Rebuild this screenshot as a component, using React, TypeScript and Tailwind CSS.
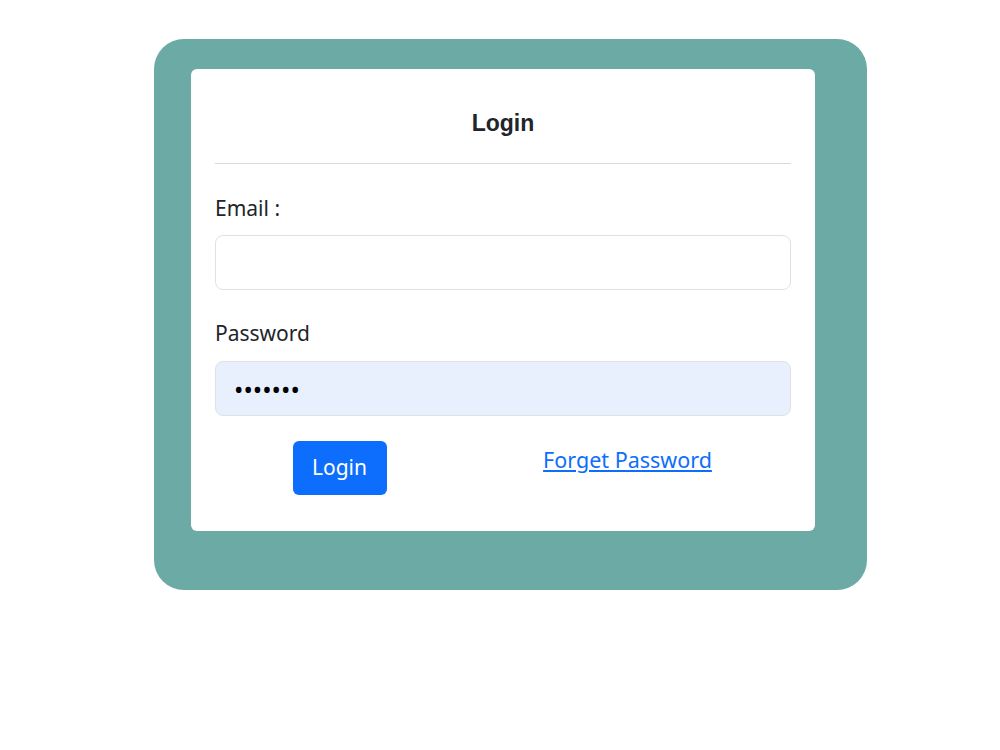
import React from "react";

export default function App() {
  return (
    <div className="min-h-[750px] w-[1000px] bg-white pt-[39px]" style={{ fontFamily: '"Noto Sans", sans-serif' }}>
      <div className="ml-[154px] w-[713px] rounded-[30px] bg-[#6caba5] pl-[37px] pr-[52px] pt-[30px] pb-[59px]">
        <div className="rounded-[6px] bg-white px-[24px] pt-[36px] pb-[36px]">
          <h1
            className="text-center text-[23px] font-bold leading-[36px] text-[#212529]"
            style={{ fontFamily: '"Liberation Sans", Arial, sans-serif' }}
          >
            Login
          </h1>
          <div className="mt-[22px] h-px bg-[#d9d9d9]" />
          <label className="mt-[29px] block text-[21px] leading-[30px] text-[#212529]">Email :</label>
          <input
            type="email"
            className="mt-[12px] block h-[55px] w-full rounded-[8px] border border-[#dee2e6] bg-white px-[20px] text-[21px] outline-none"
          />
          <label className="mt-[28px] block text-[21px] leading-[30px] text-[#212529]">Password</label>
          <input
            type="password"
            defaultValue="1234567"
            className="mt-[13px] block h-[55px] w-full rounded-[8px] border border-[#dee2e6] bg-[#e8f0fe] px-[18px] text-[25px] text-black outline-none"
          />
          <div className="mt-[25px] grid grid-cols-2">
            <div className="flex justify-center pr-[39px]">
              <button className="h-[54px] w-[94px] rounded-[6px] bg-[#0d6efd] text-[21px] text-white">Login</button>
            </div>
            <div className="flex justify-center pr-[39px] pt-[4px]">
              <a href="#" className="text-[21.5px] leading-[30px] text-[#0d6efd] underline">
                Forget Password
              </a>
            </div>
          </div>
        </div>
      </div>
    </div>
  );
}
